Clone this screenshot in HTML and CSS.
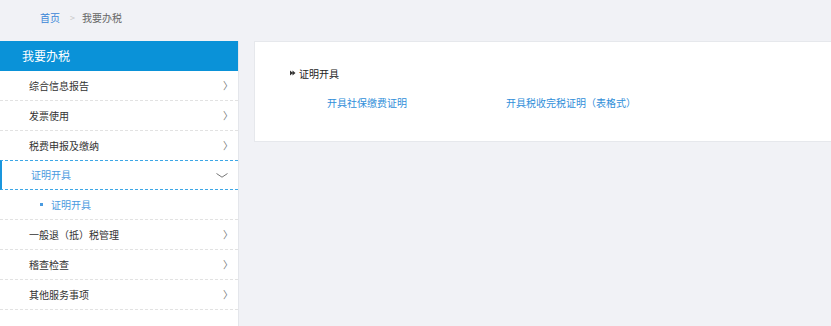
FILE: index.html
```html
<!DOCTYPE html>
<html lang="zh-CN">
<head>
  <meta charset="UTF-8">
  <title>我要办税</title>
  <link rel="stylesheet" href="styles.css">
</head>
<body>
  <div class="crumb">
    <a href="#">首页</a>
    <span class="sep">&gt;</span>
    <span class="here">我要办税</span>
  </div>
  <div class="main">
    <div class="side">
      <div class="side-title">我要办税</div>
      <ul class="menu">
        <li class="item"><span>综合信息报告</span><i class="arr">〉</i></li>
        <li class="item"><span>发票使用</span><i class="arr">〉</i></li>
        <li class="item"><span>税费申报及缴纳</span><i class="arr">〉</i></li>
        <li class="item active">
          <span>证明开具</span>
          <svg class="down" width="12" height="5" viewBox="0 0 12 5"><polyline points="0.5,0.5 6,4.2 11.5,0.5" fill="none" stroke="#777" stroke-width="1"/></svg>
        </li>
        <li class="sub"><span class="dot"></span><span>证明开具</span></li>
        <li class="item"><span>一般退（抵）税管理</span><i class="arr">〉</i></li>
        <li class="item"><span>稽查检查</span><i class="arr">〉</i></li>
        <li class="item"><span>其他服务事项</span><i class="arr">〉</i></li>
      </ul>
    </div>
    <div class="panel">
      <div class="group-title">
        <svg class="tri" width="6" height="6" viewBox="0 0 6 6"><path d="M0 0.5 L3 3 L0 5.5 Z M2.5 0.5 L5.5 3 L2.5 5.5 Z" fill="#333"/></svg>
        证明开具
      </div>
      <div class="links">
        <a href="#">开具社保缴费证明</a>
        <a href="#">开具税收完税证明（表格式）</a>
      </div>
    </div>
  </div>
</body>
</html>
```

FILE: styles.css
```css
html, body {
  margin: 0;
  padding: 0;
  height: 100%;
  background: #f1f2f6;
  font-family: "Noto Sans CJK SC", "Liberation Sans", sans-serif;
  font-size: 10px;
  color: #333;
  overflow: hidden;
}

a {
  text-decoration: none;
}

.crumb {
  height: 35px;
  padding-left: 40px;
  display: flex;
  align-items: center;
}

.crumb a {
  color: #3b86d6;
}

.crumb .sep {
  color: #c8c8c8;
  margin: 0 7px 0 10px;
  font-size: 9px;
}

.crumb .here {
  color: #666;
}

.main {
  display: flex;
  align-items: flex-start;
  margin-top: 6px;
  height: 285px;
}

.side {
  width: 238px;
  height: 100%;
  background: #fff;
  border-right: 1px solid #e4e6eb;
}

.side-title {
  height: 30px;
  line-height: 30px;
  background: #0a92d8;
  color: #fff;
  font-size: 12px;
  padding-left: 22px;
}

.menu {
  list-style: none;
  margin: 0;
  padding: 0;
}

.item, .sub {
  height: 29px;
  border-bottom: 1px dashed #e2e2e2;
  display: flex;
  align-items: center;
  padding-left: 29px;
}

.item span {
  flex: 1;
  margin-top: -1px;
}

.arr {
  font-style: normal;
  color: #777;
  font-size: 10px;
  width: 14px;
  margin-right: 1px;
}

.item.active {
  color: #4a9be0;
  border-top: 1px dashed #3da7e6;
  border-bottom: 1px dashed #3da7e6;
  border-left: 2px solid #1a96dd;
  height: 28px;
  margin-top: -1px;
}

.down {
  margin: 1px 10px 0 0;
}

.sub {
  color: #4a9be0;
  padding-left: 40px;
}

.dot {
  width: 3px;
  height: 3px;
  background: #4a9be0;
  margin-right: 8px;
}

.panel {
  flex: 1;
  margin-left: 15px;
  height: 99px;
  background: #fff;
  border: 1px solid #e6e8ec;
  border-right: none;
}

.group-title {
  display: flex;
  align-items: center;
  color: #222;
  margin: 23px 0 0 35px;
  height: 16px;
}

.tri {
  margin-right: 3px;
}

.links {
  display: flex;
  margin: 14px 0 0 72px;
}

.links a {
  color: #2f8ed9;
  width: 179px;
}

.links a + a {
  width: auto;
}
```
